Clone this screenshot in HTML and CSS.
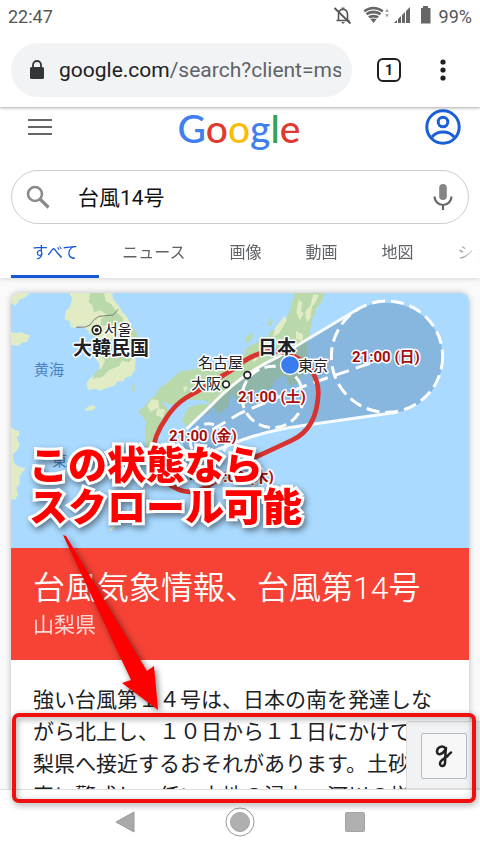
FILE: index.html
```html
<!DOCTYPE html>
<html lang="ja">
<head>
<meta charset="utf-8">
<meta name="viewport" content="width=device-width, initial-scale=1">
<title>台風14号</title>
<link rel="stylesheet" href="styles.css">
</head>
<body>
<div class="phone">
  <header class="chrome">
    <div class="status">
      <span class="clock">22:47</span>
      <span class="status-icons">
        <svg width="100" height="20" viewBox="332 7 100 20" aria-hidden="true">
          <g fill="none" stroke="#555" stroke-width="1.6">
            <path d="M336.500 21.500h13M338.500 21v-5.500c0-3 1.500-5 4.500-5.300 3 .3 4.500 2.300 4.500 5.300v5.500"/>
            <path d="M334.500 9l16 15.500" stroke-width="1.800"/>
          </g>
          <path d="M341.500 8.500h3v2h-3zM341 23h4l-2 2zM363.500 11.500c6-5 14-5 20 0l-10 12.500z" fill="#666"/>
          <g fill="none" stroke="#fff" stroke-width="1.100"><path d="M364 14.500c6-4.500 13-4.500 19 0M366.500 17.500c4.500-3 9.500-3 14 0M369 20.500c3-2 6-2 9 0"/></g>
          <path d="M385 13l2-3.500 2 3.500zM385 15l2 3.500 2-3.500z" fill="#aaa"/>
          <path d="M394 24L410 8v16z" fill="#666"/>
          <path d="M397.500 10v14M401.500 10v14M405.500 8v16" stroke="#fff" stroke-width="1"/>
          <path d="M421 9h2V7h5v2h2.500v15.500H421z" fill="#666"/>
        </svg>
        <span>99%</span>
      </span>
    </div>
    <div class="toolbar">
      <button class="address" type="button">
        <svg width="16" height="20" viewBox="0 0 16 20" aria-hidden="true"><rect x="1" y="7" width="14" height="12" rx="1.500" fill="#333538"/><path d="M4 8V5a4 4 0 0 1 8 0v3" fill="none" stroke="#333538" stroke-width="1.800"/></svg>
        <span class="url">google.com<span class="url-path">/search?client=ms-</span></span>
      </button>
      <button class="tab-count" type="button" aria-label="タブ">1</button>
      <button class="icon-button" type="button" aria-label="メニュー">
        <svg width="8" height="24" viewBox="0 0 8 24" fill="#1f1f1f"><circle cx="4" cy="4" r="2.600"/><circle cx="4" cy="12" r="2.600"/><circle cx="4" cy="20" r="2.600"/></svg>
      </button>
    </div>
  </header>

  <main class="page">
    <div class="search-area">
      <div class="brand-row">
        <button class="icon-button" type="button" aria-label="設定">
          <svg width="24" height="18" viewBox="0 0 24 18"><path d="M0 2h24M0 9h24M0 16h24" stroke="#666" stroke-width="2"/></svg>
        </button>
        <a class="logo" href="#"><span class="blue">G</span><span class="red">o</span><span class="yellow">o</span><span class="blue">g</span><span class="green">l</span><span class="red">e</span></a>
        <button class="icon-button" type="button" aria-label="アカウント">
          <svg width="36" height="36" viewBox="0 0 36 36" fill="none" stroke="#1a5fd8" stroke-width="3"><circle cx="18" cy="18" r="16.200"/><circle cx="18" cy="13" r="4.800"/><path d="M7 28c3-4 7-5 11-5s8 1 11 5"/></svg>
        </button>
      </div>
      <form class="search-box">
        <svg width="24" height="24" viewBox="0 0 24 24" fill="none" stroke="#8a8a8a" stroke-width="2.600" aria-hidden="true"><circle cx="9" cy="9" r="7"/><path d="M14 14l8.500 8.500" stroke-width="3.200"/></svg>
        <input type="text" value="台風14号" aria-label="検索">
        <button class="icon-button" type="button" aria-label="音声検索">
          <svg width="20" height="28" viewBox="0 0 20 28"><rect x="6.200" y="1" width="7.600" height="16" rx="3.800" fill="#858585"/><path d="M1.500 13.500a8.500 8.500 0 0 0 17 0M10 22v5" fill="none" stroke="#666" stroke-width="2.200"/></svg>
        </button>
      </form>
      <nav class="tabs">
        <a class="active" href="#">すべて</a>
        <a href="#">ニュース</a>
        <a href="#">画像</a>
        <a href="#">動画</a>
        <a href="#">地図</a>
        <a href="#">ショッピング</a>
      </nav>
    </div>

    <article class="card">
      <svg class="map" viewBox="11 293 458 255" role="img" aria-label="台風の進路図">
        <rect x="11" y="293" width="458" height="255" fill="#aadaff"/>
        <g transform="translate(0 285) scale(.333333)">
          <g fill="#e1ecc5">
            <path d="M33 24h58l-20 16-12 4-12 18-14-8zM33 142l20 3 8-5 16 8 13 2-8 20-16 3-10 9-23-2z"/>
            <path d="M208 24l9 17-8 26-12 12-4 24 16 4 4 20 14 2 10-7 25 12 8 14 20 9-7 26 11 9-8 27 13 20-2 18-12 12-17 13-9 14 5 18 26-3 9 6 18-7 26-8 10-13 17 1 5-12 18-5 12-18 2-37 8-8-5-42-12-38-15-32-16-18-10-17-18-21-3-25z"/>
            <path d="M255 374l10-10 16-3 7 7-11 7-18 3z"/>
            <path d="M33 425l11 9 16 6-3 12-7 4 9 23-6 15-15 14 3 24 15 14 22 3-11 12-9 15 2 18-11 15 5 20-9 15-12-3z"/>
            <path d="M325 735l12-10 12-18-4 18-12 13z"/>
          </g>
          <g fill="#b9d9aa">
            <path d="M270 24l-4 28 11 8 5 22 20-6 20 15-18 10-2 20 48 3 24 14-6-40-17-15-17-25-17-11-5-23zM320 170l-24 22-10 28 20-7 9 14-10 22-20 13-7 19 29-5 20-21 31-12 7-16 22 5 12-14 19-14-6-56-22-28z"/>
            <path d="M442 345l20-8 16-28 30-20 30-28 40-8 54-8 92-10 16-47 28-14 26-7 18-28 42-22 17-44 13-49h91l-10 28-14 16-15 37-12 65-5 48 24 8-8 35-23 3-22 30-22 10-12-33-29 12-15 28-44 5-18 37-22 15-34-43-10 42-28 20-36-40-56-4-52 16-28-12zM565 367l37-10 36 3-13 26-28 4-33 38-19-20zM415 378l20-15 18-20 26-4 15 20 13 20-13 42-20 18-10 65-26 8-4-72 5-30zM398 298h6v20h-8z"/>
            <path d="M736 160l22-20v18l-18 18zM804 118l10-22 5 15-10 15z"/>
          </g>
          <g fill="#e1ecc5">
            <path d="M895 44l12 8-4 26 8 8-12 20-10-24zM915 80l16-18 9-35 16 4-9 21-11 12-4 34-12 14zM855 91l5 16-22 37-20 13 8-29zM888 137l22 12-4 20-18-8zM455 343l20 2 3 22-27 13-9-17zM472 370l24 4-8 26-20-10zM550 304l14 3-12 16zM585 270l15 8-14 6zM762 215l14 5-18 14z"/>
          </g>
          <path d="M228 127l28-1 14-6 12-16 15-10 43-4 14-17" fill="none" stroke="#7a7e79" stroke-width="3"/>

          <path d="M1073 73C1190 15 1328 91 1328 215 1328 305 1265 376 1180 383L920 420C850 430 780 444 720 465L615 505Q550 520 548 465L580 415 750 258Z" fill="#4f7fa8" fill-opacity=".38"/>
          <g fill="none" stroke="#fff" stroke-width="9">
            <path d="M1078 70L830 218Q720 270 640 355L560 432M1190 382L920 420C830 432 770 446 700 475L610 510" stroke-opacity=".93"/>
            <circle cx="1161" cy="215" r="167" stroke-dasharray="39 18"/>
            <circle cx="818" cy="336" r="92" stroke-dasharray="34 17"/>
            <path d="M1110 235L920 300 720 385 610 450" stroke-dasharray="45 22"/>
            <circle cx="625" cy="470" r="54" stroke-dasharray="30 18"/>
          </g>
          <path d="M700 252C760 202 810 188 860 205C920 224 956 270 955 325C952 400 922 445 875 466L780 510C710 540 670 575 625 603C578 633 535 621 498 591C444 542 447 472 500 397C535 344 566 335 600 314Z" fill="none" stroke="#d8332f" stroke-width="14"/>
          <path d="M570 559l30 30M570 583l28-20" stroke="#222" stroke-width="7"/>
          <g fill="#fff" stroke="#202124" stroke-width="5">
            <circle cx="290" cy="135" r="13"/><circle cx="742" cy="270" r="10"/><circle cx="678" cy="298" r="10"/>
          </g>
          <circle cx="290" cy="135" r="6" fill="#202124"/>
        </g>
        <text class="sea" x="34" y="375">黄海</text>
        <text class="sea" x="52" y="466">東シナ海</text>
        <text class="city korean" x="104" y="335">서울</text>
        <text class="country" x="73" y="355">大韓民国</text>
        <text class="city" x="198" y="368">名古屋</text>
        <text class="city" x="191" y="389">大阪</text>
        <text class="country" x="258" y="354">日本</text>
        <text class="city" x="298" y="371">東京</text>
        <circle cx="290" cy="365" r="9.500" fill="#397cf0" stroke="#fff" stroke-width="1.300"/>
        <text class="time" x="352" y="362">21:00 (日)</text>
        <text class="time" x="238" y="402">21:00 (土)</text>
        <text class="time" x="169" y="441">21:00 (金)</text>
        <text class="time" x="206" y="482">21:00 (木)</text>
      </svg>
      <div class="alert">
        <h1>台風気象情報、台風第14号</h1>
        <p>山梨県</p>
      </div>
      <p class="report">強い台風第１４号は、日本の南を発達しな<br>がら北上し、１０日から１１日にかけて、山<br>梨県へ接近するおそれがあります。土砂災<br>害に警戒し、低い土地の浸水、河川の増水</p>
    </article>

    <div class="corner">
      <button type="button" aria-label="入力">
        <svg width="20" height="26" viewBox="0 0 20 26" fill="none" stroke="#222" stroke-width="2.500" stroke-linecap="round" stroke-linejoin="round"><path d="M11.500 5.500C9 1.500 3 4 3 8.500c0 4.500 6 3.500 9-3.500-1 6-.5 10-1 15-.5 4-5 4-5 .5 0-3.500 5-5 7.500-7.500 1.500-1.500 2-2.500 3.500-3.500"/></svg>
      </button>
    </div>
  </main>

  <footer class="system-nav">
    <button type="button" aria-label="戻る"><svg width="20" height="22" viewBox="0 0 20 22"><path d="M1 11L19 1v20z" fill="#aaa" stroke="#999"/></svg></button>
    <button type="button" aria-label="ホーム"><svg width="30" height="30" viewBox="0 0 30 30"><circle cx="15" cy="15" r="14" fill="#fff" stroke="#999"/><circle cx="15" cy="15" r="9.500" fill="#b0b0b0" stroke="#a4a4a4"/></svg></button>
    <button type="button" aria-label="履歴"><svg width="20" height="20" viewBox="0 0 20 20"><rect x=".5" y=".5" width="19" height="19" rx="1" fill="#b0b0b0" stroke="#a4a4a4"/></svg></button>
  </footer>

  <p class="callout">この状態なら<br>スクロール可能</p>
  <svg class="arrow" width="110" height="190" viewBox="56 528 110 190" aria-hidden="true"><path d="M63 535L66 536 147 671 154 666 158 710 122 683 131 680Z" fill="#f00"/></svg>
  <div class="frame"></div>
</div>
</body>
</html>
```

FILE: styles.css
```css
* {
  box-sizing: border-box;
}

body {
  margin: 0;
  font-family: Roboto, "Noto Sans CJK JP", sans-serif;
  color: #202124;
  background: #fff;
}

button {
  margin: 0;
  padding: 0;
  border: 0;
  background: none;
  font: inherit;
  color: inherit;
}

svg {
  display: block;
}

a {
  color: inherit;
  text-decoration: none;
}

h1,
p {
  margin: 0;
  font-weight: 400;
}

.phone {
  position: relative;
  display: flex;
  flex-direction: column;
  height: 100vh;
  overflow: hidden;
}

/* Status bar and browser toolbar */
.chrome {
  flex: none;
  position: relative;
  z-index: 1;
  background: #fff;
  box-shadow: 0 1px 3px rgba(0, 0, 0, 0.35);
}

.status {
  display: flex;
  align-items: center;
  justify-content: space-between;
  height: 32px;
  padding: 0 8px;
  font-size: 18px;
  color: #555;
}

.status-icons {
  display: flex;
  align-items: center;
  gap: 7px;
}

.toolbar {
  display: flex;
  align-items: center;
  height: 75px;
  padding: 0 33px 0 11px;
}

.address {
  flex: 1;
  min-width: 0;
  display: flex;
  align-items: center;
  gap: 14px;
  height: 54px;
  margin-right: 25px;
  padding: 0 11px 0 18px;
  border-radius: 27px;
  background: #f1f3f4;
  text-align: left;
}

.address svg {
  flex: none;
}

.url {
  flex: 1;
  min-width: 0;
  overflow: hidden;
  white-space: nowrap;
  font-size: 21px;
  line-height: 32px;
}

.url-path {
  color: #5f6368;
}

.tab-count {
  width: 24px;
  height: 24px;
  margin-right: 38px;
  border: 2px solid #1f1f1f;
  border-radius: 6px;
  font-size: 14px;
  font-weight: 700;
  line-height: 20px;
}

/* Search header */
.page {
  flex: 1;
  min-height: 0;
  position: relative;
  overflow: hidden;
  background: #fafafa;
}

.search-area {
  background: #fff;
  box-shadow: 0 1px 5px rgba(0, 0, 0, 0.15);
}

.brand-row {
  display: grid;
  grid-template-columns: 36px 1fr 36px;
  align-items: center;
  height: 63px;
  padding: 0 19px 27px 28px;
}

.logo {
  justify-self: center;
  padding: 3px 11px 0 0;
  font-family: Lato, sans-serif;
  font-size: 39px;
  font-weight: 500;
  line-height: 36px;
}

.blue { color: #4080ee; }
.red { color: #e0392f; }
.yellow { color: #fbbc05; }
.green { color: #34a353; }

.search-box {
  display: flex;
  align-items: center;
  height: 54px;
  margin: 0 11px;
  padding: 0 15px 0 14px;
  border: 1px solid #ccc;
  border-radius: 27px;
}

.search-box input {
  flex: 1;
  min-width: 0;
  margin-left: 28px;
  padding: 0 0 2px;
  border: 0;
  outline: 0;
  background: none;
  font: inherit;
  font-size: 21px;
  color: #111;
}

.tabs {
  display: flex;
  gap: 2px;
  height: 54px;
  padding-left: 11px;
  overflow: hidden;
  font-size: 16px;
  line-height: 58px;
  color: #5f6368;
  -webkit-mask-image: linear-gradient(to left, transparent, #000 32px);
  mask-image: linear-gradient(to left, transparent, #000 32px);
}

.tabs a {
  flex: none;
  padding: 0 21px;
}

.tabs .active {
  color: #1558d6;
  border-bottom: 3px solid #1558d6;
}

/* Typhoon card */
.card {
  margin: 15px 11px 0;
  border-radius: 8px;
  overflow: hidden;
  background: #fff;
  box-shadow: 0 0 6px rgba(0, 0, 0, 0.25);
}

.map {
  width: 100%;
  height: auto;
  font-family: "Noto Sans CJK JP", sans-serif;
}

.map text {
  paint-order: stroke;
  stroke: #fff;
  stroke-width: 3px;
  stroke-linejoin: round;
  font-size: 15px;
  fill: #202124;
}

.map .korean {
  font-family: "Noto Sans CJK KR", sans-serif;
}

.map .sea {
  stroke: none;
  fill: #4c80c0;
}

.map .country {
  font-size: 19px;
  font-weight: 700;
}

.map .time {
  font-family: Roboto, "Noto Sans CJK JP", sans-serif;
  font-weight: 700;
  fill: #a50e0e;
}

.alert {
  padding: 17px 22px 21px;
  background: #f64336;
  color: #fff;
}

.alert h1 {
  font-size: 32px;
  font-weight: 350;
  line-height: 46px;
  white-space: nowrap;
}

.alert p {
  font-size: 21px;
  line-height: 28px;
  opacity: 0.8;
}

.report {
  padding: 24px 22px;
  font-size: 21px;
  line-height: 32px;
  white-space: nowrap;
}

.corner {
  position: absolute;
  right: 0;
  bottom: 0;
  padding: 11px 13px 9px 14px;
  border: 1px solid #ddd;
  border-right: 0;
  border-radius: 4px 0 0;
  background: #f1f2f4;
}

.corner button {
  display: grid;
  place-items: center;
  width: 46px;
  height: 46px;
  border: 1px solid #b8b9bf;
  border-radius: 2px;
  background: #f7f7f8;
}

/* System navigation */
.system-nav {
  flex: none;
  display: flex;
  align-items: center;
  justify-content: center;
  gap: 90px;
  height: 64px;
  border-top: 1px solid #ddd;
  background: #fff;
}

/* Annotations */
.callout {
  position: absolute;
  z-index: 2;
  left: 29px;
  top: 441px;
  font-family: "Noto Sans CJK JP", sans-serif;
  font-size: 39px;
  font-weight: 900;
  line-height: 42px;
  white-space: nowrap;
  color: #f00;
  -webkit-text-stroke: 6px #fff;
  paint-order: stroke fill;
  filter: drop-shadow(2px 3px 3px rgba(0, 0, 0, 0.45));
}

.arrow {
  position: absolute;
  z-index: 2;
  left: 56px;
  top: 528px;
  overflow: visible;
  filter: drop-shadow(2px 2px 3px rgba(0, 0, 0, 0.5));
}

.frame {
  position: absolute;
  z-index: 2;
  left: 12px;
  right: 4px;
  bottom: 50px;
  height: 90px;
  border: 4px solid #f01010;
  border-radius: 7px;
  filter: drop-shadow(1px 2px 3px rgba(0, 0, 0, 0.4));
  pointer-events: none;
}
```
